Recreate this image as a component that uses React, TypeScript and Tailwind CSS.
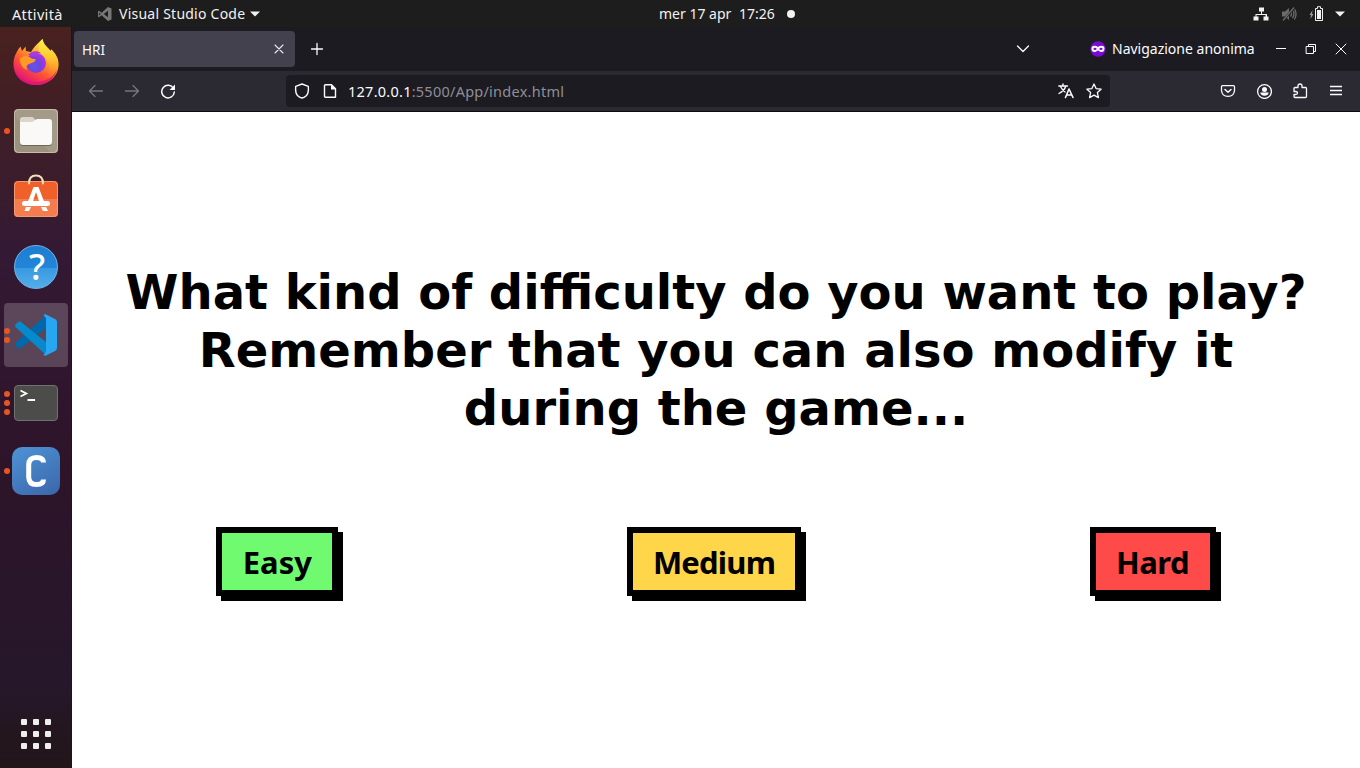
import type { ReactNode } from 'react';

const ui = "font-['Noto_Sans','Open_Sans',sans-serif]";

function Glyph({ children, className = '', size = 16 }: { children: ReactNode; className?: string; size?: number }) {
  return (
    <svg
      width={size}
      height={size}
      viewBox={`0 0 ${size} ${size}`}
      fill="none"
      stroke="currentColor"
      strokeWidth="1.3"
      strokeLinecap="round"
      strokeLinejoin="round"
      className={`block shrink-0 ${className}`}
    >
      {children}
    </svg>
  );
}

function TopBar() {
  return (
    <header className="grid h-[27px] shrink-0 grid-cols-[1fr_auto_1fr] items-center bg-[#1d1d1d] text-[14px] leading-[26px] text-[#f2f2f2]">
      <div className="flex items-center pl-3">
        <span className="w-[51px] whitespace-nowrap text-[14.5px] tracking-[0.35px]">Attività</span>
        <svg width="16" height="16" viewBox="0 0 16 16" className="ml-[34px] block">
          <path d="M11 1 4.6 6.7 2 4.7 1 5.3v5.4l1 .6 2.6-2L11 15l3.5-1.600V2.600zM2.200 6.500 3.700 8 2.200 9.500zM11 4.800v6.400L6.800 8z" fill="#777" fillRule="evenodd" />
        </svg>
        <span className="ml-[6px] w-[127px] whitespace-nowrap tracking-[0.24px]">Visual Studio Code</span>
        <svg width="10" height="6" viewBox="0 0 10 6" className="ml-1 block"><path d="M0 .5h10L5 5.500z" fill="#f2f2f2" /></svg>
      </div>
      <div className="flex items-center pl-[94px]">
        <span className="w-[72px] whitespace-nowrap">mer 17 apr</span>
        <span className="ml-2 w-[36px] whitespace-nowrap">17:26</span>
        <span className="ml-3 h-2 w-2 rounded-full bg-[#f2f2f2]" />
      </div>
      <div className="flex items-center justify-end pr-[15px]">
        <svg width="16" height="16" viewBox="0 0 16 16" className="block">
          <path d="M6 1.500h5v4H9V8h5v2.500h1.500v4h-5v-4h2V9H3.500v1.500H5.500v4h-5v-4H2.500V8H8V5.500H6z" fill="#f2f2f2" />
        </svg>
        <svg width="16" height="16" viewBox="0 0 16 16" className="ml-3 block" fill="none" stroke="#6b6b6b" strokeWidth="1.300">
          <path d="M1 5.500h3L8 2v12L4 10.500H1z" fill="#6b6b6b" stroke="none" />
          <path d="M9.500 5.500q2 2.500 0 5M11.500 4q3 4 0 8M13.300 2.500q3.500 5.500 0 11" />
          <path d="M14 1 2 14.500" stroke="#1d1d1d" strokeWidth="2.500" />
          <path d="M13 1.500 2 14.500" />
        </svg>
        <svg width="15" height="16" viewBox="0 0 15 16" className="ml-3 block">
          <path d="M3.500 4 .5 9H2l-.5 4 3-5H3z" fill="#999" />
          <path d="M6.500 2.500h2V.7h3v1.800h2v12h-7z" fill="none" stroke="#f2f2f2" />
          <path d="M8 4h4v9H8z" fill="#f2f2f2" />
        </svg>
        <svg width="10" height="6" viewBox="0 0 10 6" className="ml-[11px] block"><path d="M0 .5h10L5 5.500z" fill="#f2f2f2" /></svg>
      </div>
    </header>
  );
}

function DockItem({ dots = 0, active = false, children }: { dots?: number; active?: boolean; children: ReactNode }) {
  return (
    <div className={`relative flex h-16 w-16 shrink-0 items-center justify-center rounded-[4px] ${active ? 'bg-white/20' : ''}`}>
      <div className="absolute left-0 top-0 flex h-full flex-col items-center justify-center gap-[3px]">
        {Array.from({ length: dots }, (_, i) => (
          <span key={i} className="h-[6px] w-[6px] rounded-full bg-[#e95420]" />
        ))}
      </div>
      {children}
    </div>
  );
}

function Firefox() {
  return (
    <svg width="48" height="48" viewBox="0 0 48 48" className="block">
      <defs>
        <linearGradient id="ffBody" x1=".8" y1=".1" x2=".25" y2=".95">
          <stop offset="0" stopColor="#fff44f" />
          <stop offset=".35" stopColor="#ffa52a" />
          <stop offset=".65" stopColor="#ff5035" />
          <stop offset="1" stopColor="#e0107c" />
        </linearGradient>
        <linearGradient id="ffTail" x1=".5" y1="0" x2=".5" y2="1">
          <stop offset="0" stopColor="#fff24d" />
          <stop offset=".5" stopColor="#ffc52f" />
          <stop offset="1" stopColor="#ff7a2c" stopOpacity="0" />
        </linearGradient>
        <radialGradient id="ffGlobe" cx=".4" cy=".65" r=".7">
          <stop offset="0" stopColor="#5a5be0" />
          <stop offset=".5" stopColor="#7a3fe0" />
          <stop offset="1" stopColor="#b833e1" />
        </radialGradient>
      </defs>
      <path d="M4.500 13.500Q6 10 8.500 7.500L10 12l3.500-4.500.5 4.500 5 1C22 8 25 5 30.500 0c1 6 5 8 8 12l1-1.500c5 5 7.500 10 7 16C46 38 36 46 24 46S2 38 1.500 26c-.3-5 1-9 3-12.500z" fill="url(#ffBody)" />
      <path d="M27 13C26 8 27.500 3 30.500 0c1 6 5 8 8 12l1-1.500c5 6 7.500 11 6.500 18-2 7-7 10-12 10 5-5 5-14-1-20z" fill="url(#ffTail)" />
      <circle cx="24" cy="24" r="10" fill="url(#ffGlobe)" />
      <path d="M16 16c3-4 9-5 13-2-3 0-5 1-5 3z" fill="#a83bdc" />
      <path d="M7.500 20c3-3 7-4 10-2 1.500 2 4 1.500 6.500 2.500-1 3-5 3.500-7 4.500-3 1.500-3 4-1.500 6-4-1-7-4-8-11z" fill="#ff9b24" />
      <path d="M2 30c3 9 11 13 21 13 11 0 19-5 22-13-2 10-11 16-21.500 16S3.500 39 2 30z" fill="#e0107c" opacity=".75" />
    </svg>
  );
}

function Files() {
  return (
    <svg width="46" height="46" viewBox="0 0 46 46" className="block">
      <rect x="1" y="1" width="44" height="44" rx="4" fill="#9a927f" />
      <path d="M5 1h36q4 0 4 4v36q0 4-4 4h-3L3 10V3z" fill="#aca38f" opacity=".55" />
      <rect x="1.500" y="1.500" width="43" height="43" rx="4" fill="none" stroke="#c5bea9" />
      <path d="M7 12q0-3 3-3h9q1.500 0 2.500 2l1 1.500H36v8H7z" fill="#dcd6c8" />
      <path d="M7 15h11.500q2 0 3-1.500t3-1.500H36q3 0 3 3v20q0 3-3 3H10q-3 0-3-3z" fill="#6c6658" />
      <path d="M7 14h11.500q2 0 3-1.500t3-1.500H36q3 0 3 3v20q0 3-3 3H10q-3 0-3-3z" fill="#faf9f7" />
    </svg>
  );
}

function Software() {
  return (
    <svg width="46" height="46" viewBox="0 0 46 46" className="block">
      <rect x="1" y="9" width="44" height="36" rx="4" fill="#f0602a" />
      <path d="M1 27h44v14q0 4-4 4H5q-4 0-4-4z" fill="#f47d50" />
      <rect x="1.500" y="9.500" width="43" height="35" rx="4" fill="none" stroke="#f59a70" />
      <path d="M16 11.500Q16 3.500 23 3.500t7 8" fill="none" stroke="#f3deb5" strokeWidth="2" strokeLinecap="round" />
      <path d="M20.500 15h5l6.500 17h-5L23 20l-4 12h-5z" fill="#fff" />
      <rect x="9" y="29" width="28" height="5" rx="2.500" fill="#fff" />
      <path d="M13 35h5l-2 4h-4.500zM28 35h5l2 4h-5z" fill="#fff" />
    </svg>
  );
}

function Help() {
  return (
    <div className="flex h-11 w-11 items-center justify-center rounded-full border border-[#6fb6ec] bg-[linear-gradient(#1c7dd1,#2386d9_53%,#389ae1_53%,#54ade9)] pl-[2px] font-['Noto_Sans',sans-serif] text-[36px] font-medium leading-none text-white">
      <span>?</span>
    </div>
  );
}

function Code() {
  return (
    <svg width="46" height="46" viewBox="0 0 46 46" className="block">
      <path d="M33 3 2.500 31q-1 1 0 2.500L5 36q1.500 1 3 0L34 15z" fill="#0068ad" />
      <path d="M33 43 2.500 15q-1-1 0-2.500L5 10q1.500-1 3 0L34 31z" fill="#078acb" />
      <path d="M33 2.500 42 7q2 1 2 3v26q0 2-2 3l-9 4.500q-1.500.5-2.500-.5l2.500-3V6l-2.500-3q1-1 2.500-.5z" fill="#27a7f2" />
    </svg>
  );
}

function Terminal() {
  return (
    <svg width="46" height="38" viewBox="0 0 46 38" className="block">
      <rect x="1.500" y="1.500" width="43" height="35" rx="3.500" fill="#4c4c4b" stroke="#71716d" />
      <path d="m7.500 6.500 5.800 3-5.800 3M14.500 16H22" fill="none" stroke="#fff" strokeWidth="1.800" />
    </svg>
  );
}

function CApp() {
  return (
    <svg width="48" height="48" viewBox="0 0 48 48" className="block">
      <defs>
        <linearGradient id="cBg" x1=".2" y1="0" x2=".8" y2="1">
          <stop offset="0" stopColor="#4c90d2" />
          <stop offset="1" stopColor="#3d69ae" />
        </linearGradient>
      </defs>
      <rect width="48" height="48" rx="10" fill="url(#cBg)" />
      <path d="M31.500 15.500Q31.500 10.500 24.500 10.500 16.700 10.500 16.700 18v12q0 7.500 7.800 7.500 7 0 7-5" fill="none" stroke="#fff" strokeWidth="5" />
    </svg>
  );
}

function Dock() {
  return (
    <aside className="flex w-[72px] shrink-0 flex-col items-center gap-1 bg-[linear-gradient(#49211f,#3b1d2b_20%,#341934_30%,#2d1429_60%,#26172b_89%,#23161d_96%,#22161b)] pt-1 shadow-[inset_-1px_0_#21101f]">
      <DockItem><Firefox /></DockItem>
      <DockItem dots={1}><Files /></DockItem>
      <DockItem><div className="pb-2"><Software /></div></DockItem>
      <DockItem><Help /></DockItem>
      <DockItem dots={2} active><Code /></DockItem>
      <DockItem dots={3}><Terminal /></DockItem>
      <DockItem dots={1}><CApp /></DockItem>
      <div className="mb-[19px] mt-auto grid grid-cols-3 gap-[6px]">
        {Array.from({ length: 9 }, (_, i) => (
          <span key={i} className="h-[6px] w-[6px] rounded-[1px] bg-[#eeeeec]" />
        ))}
      </div>
    </aside>
  );
}

function TabStrip() {
  return (
    <div className="flex h-11 shrink-0 items-center bg-[#1c1b22] pl-[2px] pr-3 text-[14px] text-[#fbfbfe]">
      <div className="flex h-9 w-[221px] items-center justify-between rounded-[4px] bg-[#42414d] pl-2 pr-2">
        <span className="pt-[2px] text-[13.500px]">HRI</span>
        <Glyph className="text-[#e8e8ec]"><path d="m4 4 8 8M12 4l-8 8" strokeWidth="1.100" /></Glyph>
      </div>
      <Glyph className="ml-[14px]"><path d="M8 2.500v11M2.500 8h11" /></Glyph>
      <Glyph className="ml-auto"><path d="m2.500 5 5.500 5.500L13.500 5" /></Glyph>
      <svg width="16" height="16" viewBox="0 0 16 16" className="ml-[59px] block shrink-0">
        <circle cx="8" cy="8" r="7.700" fill="#7a0bd6" />
        <path d="M4.500 4.800Q6.500 4.800 8 6q1.500-1.200 3.500-1.200 3 0 3 2.700 0 3.500-3.200 3.500C9.500 11 9 9.500 8 9.500S6.500 11 4.700 11C2 11 1.500 9.500 1.500 7.500q0-2.700 3-2.700z" fill="#fff" />
        <ellipse cx="5" cy="7.900" rx="1.600" ry="1.100" fill="#7a0bd6" />
        <ellipse cx="11" cy="7.900" rx="1.600" ry="1.100" fill="#7a0bd6" />
      </svg>
      <span className="ml-[6px] w-[142px] whitespace-nowrap pb-[2px]">Navigazione anonima</span>
      <Glyph className="ml-[19px]"><path d="M3 7.500h10" strokeWidth="1" strokeLinecap="butt" /></Glyph>
      <Glyph className="ml-[14px]"><path d="M3.500 5.500h7v7h-7zM5.500 5.500v-2h7v7h-2" strokeWidth="1" strokeLinejoin="miter" /></Glyph>
      <Glyph className="ml-[14px] mr-[-1px]"><path d="m3 3 10 10M13 3 3 13" strokeWidth="1" /></Glyph>
    </div>
  );
}

function Toolbar() {
  return (
    <div className="flex h-[41px] shrink-0 items-center border-b border-[#0c0c0d] bg-[#2b2a33] pl-4 pr-4 text-[#fbfbfe]">
      <Glyph className="text-[#77767e]"><path d="M14.500 8h-13M7 2.500 1.500 8 7 13.500" /></Glyph>
      <Glyph className="ml-5 text-[#77767e]"><path d="M1.500 8h13M9 2.500 14.500 8 9 13.500" /></Glyph>
      <Glyph className="ml-5"><path d="M13.500 5.500A6.300 6.300 0 1 0 14.300 9" strokeWidth="1.500" /><path d="M15 1.500V7H9.500z" fill="currentColor" stroke="none" /></Glyph>
      <div className="ml-[110px] flex h-8 w-[824px] items-center rounded-[4px] bg-[#1c1b22] px-2">
        <Glyph><path d="M8 1 14.300 3.300q.7 7.200-2.300 9.700-2 1.700-4 2-2-.3-4-2Q1 10.500 1.700 3.300z" strokeWidth="1.400" /></Glyph>
        <Glyph className="ml-3"><path d="M3.500 1.700h6l4 4v8.600h-10q-1 0-1-1V2.700q0-1 1-1z" strokeWidth="1.400" /><path d="M9 1.500v5h5z" fill="currentColor" stroke="none" /></Glyph>
        <span className="ml-[10px] whitespace-nowrap pt-[2px] text-[14.500px] tracking-[0.25px] text-[#8f8e97]"><span className="text-[#fbfbfe]">127.0.0.1</span>:5500/App/index.html</span>
        <Glyph className="ml-auto">
          <path d="M.8 3h8.700M5 1v2M7.800 3Q6.500 7.500 1 10.500M2.500 3.500Q4.500 7.500 7 9" strokeWidth="1.400" />
          <path d="m7.500 14.500 3.500-8.500 4 8.500M8.700 12h5" strokeWidth="1.600" />
        </Glyph>
        <Glyph className="ml-3"><path d="m8 1 2.100 4.600 5 .6-3.700 3.400 1 5L8 12.100l-4.400 2.500 1-5L.9 6.200l5-.6z" /></Glyph>
      </div>
      <Glyph className="ml-auto"><path d="M2.500 2.700h11q1 0 1 1v3.800Q14 13.300 8 13.300T1.500 7.500V3.700q0-1 1-1z" strokeWidth="1.300" /><path d="M5 6.500 8 9.300l3-2.800" strokeWidth="1.500" /></Glyph>
      <Glyph className="ml-[20px]"><circle cx="8.500" cy="8.500" r="6.900" /><circle cx="8.500" cy="6.500" r="2.500" fill="currentColor" stroke="none" /><path d="M4.300 9.500h8.400Q12 12.700 8.500 12.700T4.300 9.500z" fill="currentColor" stroke="none" /></Glyph>
      <Glyph className="ml-[20px]"><path d="M2 5.500q0-1 1-1h3V3q0-2 2-2t2 2v1.500h3.500q1 0 1 1v8q0 1-1 1H3q-1 0-1-1v-2h1.500q2 0 2-1.500t-2-1.500H2z" /></Glyph>
      <Glyph className="ml-[20px]"><path d="M2 3.500h12M2 7.500h12M2 11.500h12" strokeLinecap="butt" /></Glyph>
    </div>
  );
}

function Page() {
  const button = "h-[69px] whitespace-nowrap border-[6px] border-black text-[31px] font-bold leading-[56px] text-black shadow-[5px_5px_0_#000]";
  return (
    <main className="flex-1 bg-white pt-[151px]">
      <h1 className="text-center font-['DejaVu_Sans',sans-serif] text-[48px] font-bold leading-[58px] text-black">
        What kind of difficulty do you want to play?<br />
        Remember that you can also modify it<br />
        during the game...
      </h1>
      <div className="mt-[90px] flex justify-around">
        <button className={`w-[122px] bg-[#70fa70] ${button}`}>Easy</button>
        <button className={`w-[174px] bg-[#ffd54a] tracking-[-0.8px] ${button}`}>Medium</button>
        <button className={`w-[126px] bg-[#ff4a4a] tracking-[-0.5px] ${button}`}>Hard</button>
      </div>
    </main>
  );
}

export default function App() {
  return (
    <div className={`flex h-screen w-full flex-col overflow-hidden ${ui}`}>
      <TopBar />
      <div className="flex min-h-0 flex-1">
        <Dock />
        <div className="flex min-w-0 flex-1 flex-col">
          <TabStrip />
          <Toolbar />
          <Page />
        </div>
      </div>
    </div>
  );
}
